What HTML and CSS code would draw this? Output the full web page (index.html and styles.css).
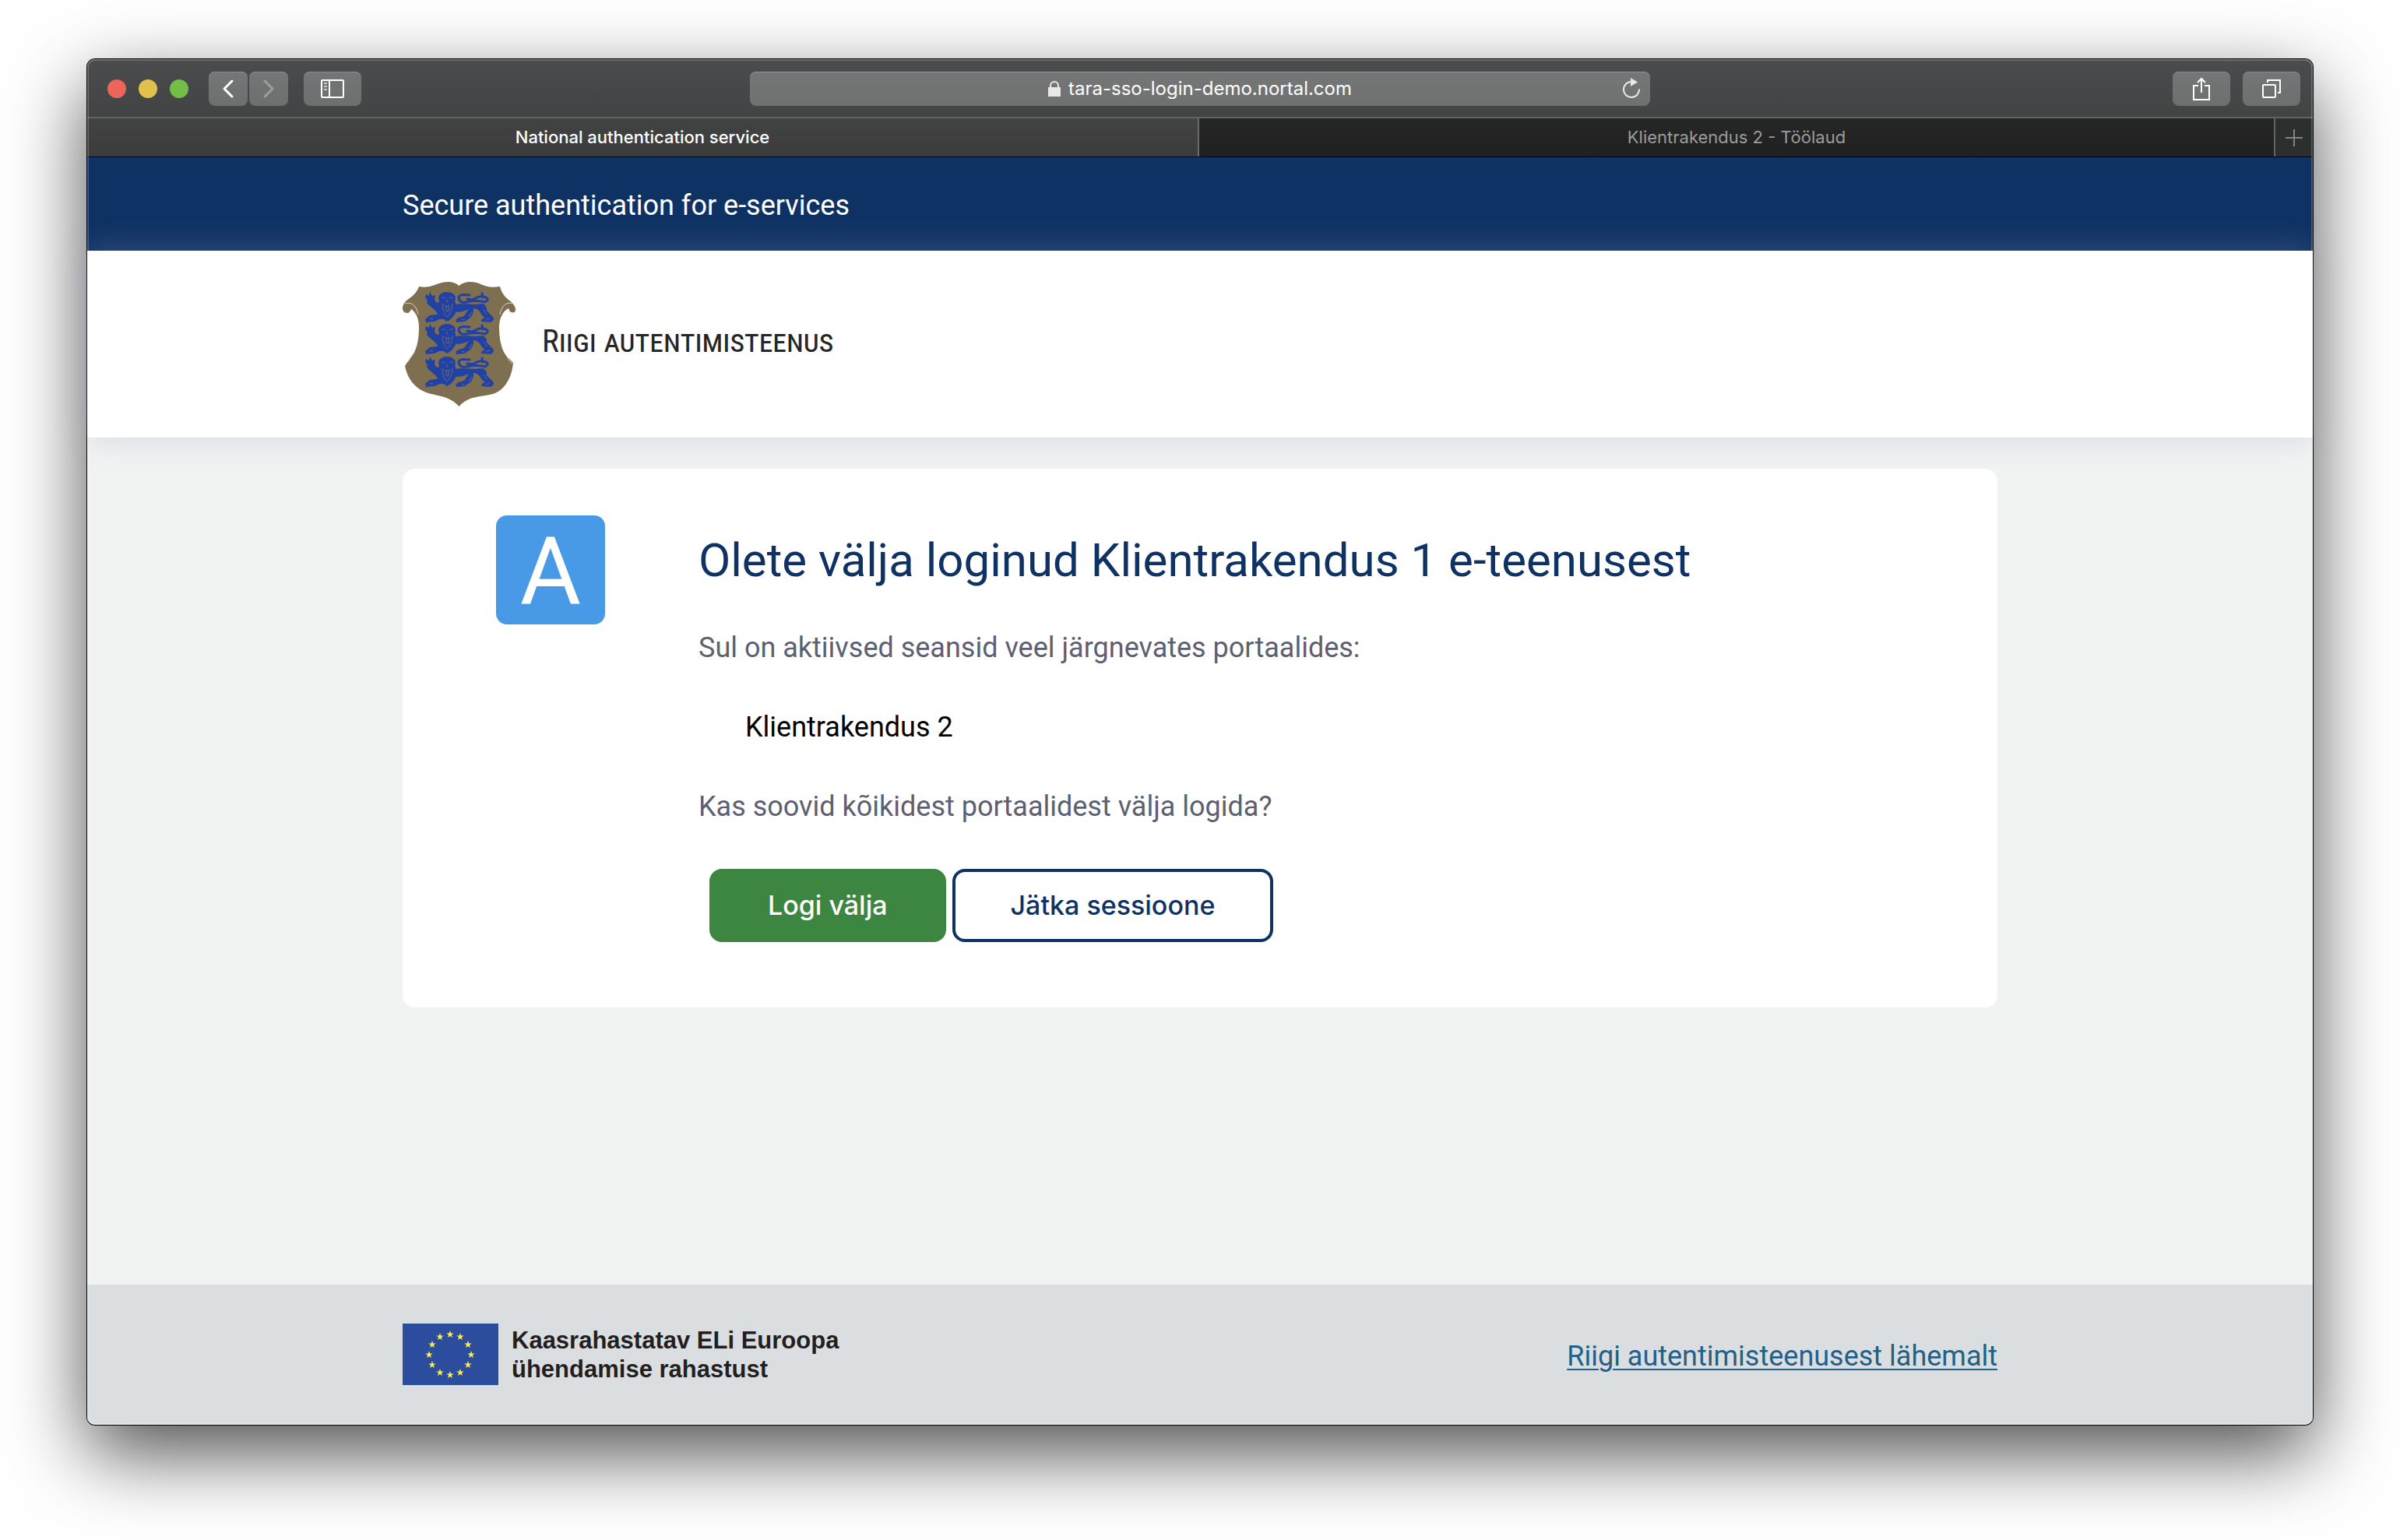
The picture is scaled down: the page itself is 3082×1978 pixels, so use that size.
FILE: index.html
```html
<!DOCTYPE html>
<html lang="et">
<head>
<meta charset="utf-8">
<title>National authentication service</title>
<link rel="stylesheet" href="styles.css">
</head>
<body>
<div class="window">
  <div class="chrome">
    <div class="toolbar">
      <div class="toolbar-left">
        <div class="lights">
          <span class="light light-close"></span>
          <span class="light light-min"></span>
          <span class="light light-max"></span>
        </div>
        <div class="history">
          <button class="tool tool-small" type="button" aria-label="Back">
            <svg width="16" height="26" viewBox="0 0 16 26" fill="none" stroke="#fff" stroke-width="3" stroke-linecap="round" stroke-linejoin="round"><path d="M13 3 3 13l10 10"/></svg>
          </button>
          <button class="tool tool-small" type="button" aria-label="Forward">
            <svg width="16" height="26" viewBox="0 0 16 26" fill="none" stroke="#9c9d9d" stroke-width="3" stroke-linecap="round" stroke-linejoin="round"><path d="m3 3 10 10L3 23"/></svg>
          </button>
        </div>
        <button class="tool" type="button" aria-label="Sidebar">
          <svg width="30" height="24" viewBox="0 0 30 24" fill="none" stroke="#fff" stroke-width="2"><rect x="1" y="1" width="28" height="22" rx="1"/><path d="M11 1v22"/><path d="M4 5h4M4 9h4M4 13h4" stroke="#c8c8c8"/></svg>
        </button>
      </div>
      <div class="address">
        <svg width="16" height="20" viewBox="0 0 16 20"><path d="M0 8h16v12H0z" fill="#e8e8e8"/><path d="M3 9V6a5 5 0 0 1 10 0v3" fill="none" stroke="#e8e8e8" stroke-width="2"/></svg>
        <span>tara-sso-login-demo.nortal.com</span>
        <button class="reload" type="button" aria-label="Reload">
          <svg width="22" height="26" viewBox="0 0 22 26"><path d="M11 5A10 10 0 1 0 21 14.500" fill="none" stroke="#e8e8e8" stroke-width="2"/><path d="M10 0l9 5.500-9 5.500z" fill="#e8e8e8"/></svg>
        </button>
      </div>
      <div class="toolbar-right">
        <button class="tool" type="button" aria-label="Share">
          <svg width="22" height="32" viewBox="0 0 22 32" fill="none" stroke="#fff" stroke-width="2"><path d="M7 12H1v18h20V12h-6"/><path d="M11 21V3M6 8l5-5 5 5"/></svg>
        </button>
        <button class="tool" type="button" aria-label="Show tabs">
          <svg width="24" height="24" viewBox="0 0 24 24" fill="none" stroke="#fff" stroke-width="2"><rect x="1" y="7" width="16" height="16" rx="1"/><path d="M7 4V1h16v16h-3"/></svg>
        </button>
      </div>
    </div>
    <div class="tabs">
      <div class="tab tab-active">National authentication service</div>
      <div class="tab">Klientrakendus 2 - Töölaud</div>
      <button class="tab-add" type="button" aria-label="New tab">
        <svg width="22" height="22" viewBox="0 0 22 22" stroke="#828383" stroke-width="2"><path d="M11 0v22M0 11h22"/></svg>
      </button>
    </div>
  </div>

  <div class="topbar"><div class="container">Secure authentication for e-services</div></div>

  <header class="header">
    <div class="container brand">
      <svg width="145" height="160" viewBox="0 0 145 160">
        <defs>
          <g id="lion" fill="#2142a4">
            <path d="M1 3l4 2 1-5 3 5 4-1-1 6 2 3 5 2 5 4 3 6-2 8-7-3-6-7-6-5-4-4 1-3-3-4z"/>
            <ellipse cx="28" cy="8" rx="11" ry="8"/>
            <path d="M18 10q-2 10-1 16 4 8 11 12 8-4 12-13 0-9-2-15z"/>
            <path d="M22 26l-8 3-8 1-6 5 1 4 11-1 6-3 10 0 4-9z"/>
            <path d="M36 17C45 14 55 16 64 16L74 15Q80 18 79 24L86 31Q89 34 87 37L84 39 72 38Q72 34 77 33 73 31 70 25 66 21 62 21 63 27 58 33L51 38 40 39Q38 35 43 33L50 31Q53 26 56 22 48 26 40 26z"/>
            <path d="M57 4Q44 2 43 7 44 15 53 13 66 10 77 13 83 10 78 7 70 4 65 8 60 11 54 9M73 2l1 5" fill="none" stroke="#2142a4" stroke-width="3" stroke-linecap="round"/>
            <path d="M21 8q2-3 5 0M31 8q3-3 5 0M28 9v5M24 17q4 3 8 0M22 15q0 12 6 17 6-5 7-17M27 18v7h3v-7M56 32l4-6M75 23l4 6M47 35l4 1M78 36l5-2M6 34l4 1" fill="none" stroke="#6a6a72" stroke-width="1"/>
          </g>
        </defs>
        <path d="M72.500 5C79-1 90-1 98 2c9 4 15 6 27 4 2 8 6 13 11 17 6 4 9 9 9 13 0 3-3 4-5 3-2 0-3-2-4-5-8 4-12 14-12 24 0 16 3 30 10 38l8 8c-2 22-13 36-26 40-16 4-31 2-43.500 16C60 146 44 147 30 142 15 136 6 124 3 108l6-9c9-9 12-24 12-40 0-11-3-19-10-24-1 3-3 5-5 5-4 0-6-3-6-6 0-5 3-9 9-13 6-4 10-9 12-15 12 2 17-1 26-4 9-3 19-3 25.500 3z" fill="#7e6f50"/>
        <path d="M3 28c9-3 15 3 17 14M142 28c-9-3-15 3-17 14M4 105c3-2 5-5 7-9M141 105c-3-2-5-5-7-9" fill="none" stroke="#d8d2c4" stroke-width="1"/>
        <use href="#lion" x="29" y="13"/><use href="#lion" x="29" y="54"/><use href="#lion" x="29" y="96"/>
      </svg>
      <span class="brand-name">Riigi autentimisteenus</span>
    </div>
  </header>

  <main class="main">
    <section class="container card">
      <div class="app-icon">A</div>
      <div class="card-body">
        <h1>Olete välja loginud Klientrakendus 1 e-teenusest</h1>
        <p>Sul on aktiivsed seansid veel järgnevates portaalides:</p>
        <ul><li>Klientrakendus 2</li></ul>
        <p>Kas soovid kõikidest portaalidest välja logida?</p>
        <div class="actions">
          <button class="btn btn-primary" type="button">Logi välja</button>
          <button class="btn" type="button">Jätka sessioone</button>
        </div>
      </div>
    </section>
  </main>

  <footer class="footer">
    <div class="container footer-row">
      <div class="fund">
        <svg width="123" height="80" viewBox="0 0 123 80">
          <defs><path id="star" d="M0-5 1.200-1.600 4.800-1.500 1.900.6 2.900 4 0 2-2.900 4-1.900.6-4.800-1.500-1.200-1.600z" fill="#fdee4f"/></defs>
          <rect width="123" height="79" fill="#2c4c9e"/>
          <use href="#star" x="61" y="14"/><use href="#star" x="74" y="17"/><use href="#star" x="84" y="27"/><use href="#star" x="88" y="40"/><use href="#star" x="84" y="53"/><use href="#star" x="74" y="63"/><use href="#star" x="61" y="66"/><use href="#star" x="48" y="63"/><use href="#star" x="38" y="53"/><use href="#star" x="34" y="40"/><use href="#star" x="38" y="27"/><use href="#star" x="48" y="17"/>
        </svg>
        <div class="fund-text">Kaasrahastatav ELi Euroopa<br>ühendamise rahastust</div>
      </div>
      <a class="more" href="#">Riigi autentimisteenusest lähemalt</a>
    </div>
  </footer>
</div>
</body>
</html>
```
FILE: styles.css
```css
* {
  box-sizing: border-box;
}

body {
  margin: 0;
  min-height: 100vh;
  padding: 76px 112px 148px;
  display: flex;
  background: #fff;
  font-family: Roboto, "Liberation Sans", sans-serif;
  font-size: 36px;
  line-height: 52px;
}

svg {
  display: block;
  flex: none;
}

button {
  font: inherit;
  border: 0;
  padding: 0;
  background: none;
  display: flex;
  align-items: center;
  justify-content: center;
}

.window {
  flex: 1;
  display: flex;
  flex-direction: column;
  position: relative;
  border-radius: 10px;
  background: #f1f3f3;
  box-shadow: 0 0 0 1px #000, 0 36px 100px rgba(0, 0, 0, 0.7);
}

/* light inner rim of the window frame */
.window::after {
  content: "";
  position: absolute;
  inset: 0;
  border-radius: 10px;
  box-shadow: inset 0 0 0 2px rgba(255, 255, 255, 0.2);
  pointer-events: none;
  z-index: 2;
}

.chrome {
  border-radius: 10px 10px 0 0;
  background: linear-gradient(#4b4c4e, #3b3c3b);
  border-bottom: 1px solid #000;
  font-family: Inter, "Liberation Sans", sans-serif;
  color: #fff;
}

.toolbar {
  height: 76px;
  padding: 2px 16px 0;
  display: grid;
  grid-template-columns: 1fr 1156px 1fr;
  align-items: center;
  border-bottom: 2px solid #626363;
}

.toolbar-left,
.toolbar-right {
  display: flex;
  align-items: center;
}

.toolbar-left {
  gap: 20px;
}

.toolbar-right {
  gap: 16px;
  justify-content: flex-end;
}

.lights {
  display: flex;
  gap: 16px;
  margin: 0 6px 0 10px;
}

.light {
  width: 24px;
  height: 24px;
  border-radius: 50%;
}

.light-close {
  background: #ed6559;
}

.light-min {
  background: #e1c04c;
}

.light-max {
  background: #72be47;
}

.history {
  display: flex;
  gap: 2px;
}

.tool {
  width: 74px;
  height: 44px;
  border-radius: 8px;
  background: linear-gradient(#747677, #6d6e6e);
  box-shadow: inset 0 1px 0 #8b8c8c;
}

.tool-small {
  width: 50px;
}

.address {
  height: 44px;
  border-radius: 8px;
  display: flex;
  align-items: center;
  justify-content: center;
  gap: 10px;
  position: relative;
  background: linear-gradient(#757776, #6f7170);
  box-shadow: inset 0 1px 0 #8f9090;
  font-size: 24px;
  line-height: 32px;
}

.reload {
  position: absolute;
  right: 13px;
  top: 8px;
}

.tabs {
  height: 49px;
  display: flex;
  font-size: 22px;
  line-height: 48px;
  text-align: center;
}

.tab {
  flex: 1;
  background: linear-gradient(#252626, #202020);
  color: #9b9c9c;
}

.tab-active {
  flex: 0 0 calc(50% - 1px);
  background: none;
  color: #fff;
  font-weight: 500;
  border-right: 2px solid #6a6b6b;
}

.tab-add {
  width: 50px;
  border-left: 2px solid #626363;
  background: #2d2e2e;
}

.container {
  width: calc(100% - 80px);
  max-width: 2048px;
  margin: 0 auto;
}

.topbar {
  background: #0f3264;
  color: #fff;
  padding: 36px 0 32px;
}

.header {
  position: relative;
  background: #fff;
  padding: 40px 0;
  box-shadow: 0 0 40px rgba(150, 155, 185, 0.32);
}

.brand {
  display: flex;
  align-items: center;
  gap: 34px;
}

.brand-name {
  padding-bottom: 8px;
  font-family: "Roboto Condensed", "Liberation Sans Narrow", Roboto, sans-serif;
  font-size: 41px;
  font-variant: small-caps;
  color: #262626;
}

.main {
  flex: 1;
  padding: 40px 0;
}

.card {
  display: flex;
  gap: 120px;
  padding: 60px 120px 84px;
  border-radius: 16px;
  background: #fff;
}

.app-icon {
  flex: none;
  width: 140px;
  height: 140px;
  border-radius: 14px;
  background: #489ae7;
  color: #fff;
  font-size: 120px;
  line-height: 144px;
  text-align: center;
}

h1 {
  margin: 18px 0 46px;
  font-size: 60px;
  line-height: 80px;
  font-weight: 400;
  color: #0f3264;
}

p {
  margin: 0 0 50px;
  color: #5d6071;
}

ul {
  list-style: none;
  margin: 0 0 50px;
  padding: 0 0 0 60px;
  color: #000;
}

.actions {
  display: flex;
  gap: 8px;
  margin: 54px 0 0 14px;
}

.btn {
  height: 94px;
  padding: 0 71px;
  border: 4px solid #0f3264;
  border-radius: 16px;
  background: #fff;
  color: #0f3264;
  font-family: Inter, "Liberation Sans", sans-serif;
  font-size: 34px;
  font-weight: 500;
}

.btn-primary {
  border-color: #3d8641;
  background: #3d8641;
  color: #fff;
}

.footer {
  padding: 50px 0;
  border-radius: 0 0 10px 10px;
  background: #dbdee1;
}

.footer-row,
.fund {
  display: flex;
  align-items: center;
}

.footer-row {
  justify-content: space-between;
}

.fund {
  gap: 17px;
}

.fund-text {
  font-family: "Liberation Sans", Arial, sans-serif;
  font-size: 31px;
  line-height: 37px;
  font-weight: 700;
  color: #231f20;
}

.more {
  padding-top: 3px;
  color: #245f86;
  text-underline-offset: 4px;
  text-decoration-thickness: 2px;
}
```
